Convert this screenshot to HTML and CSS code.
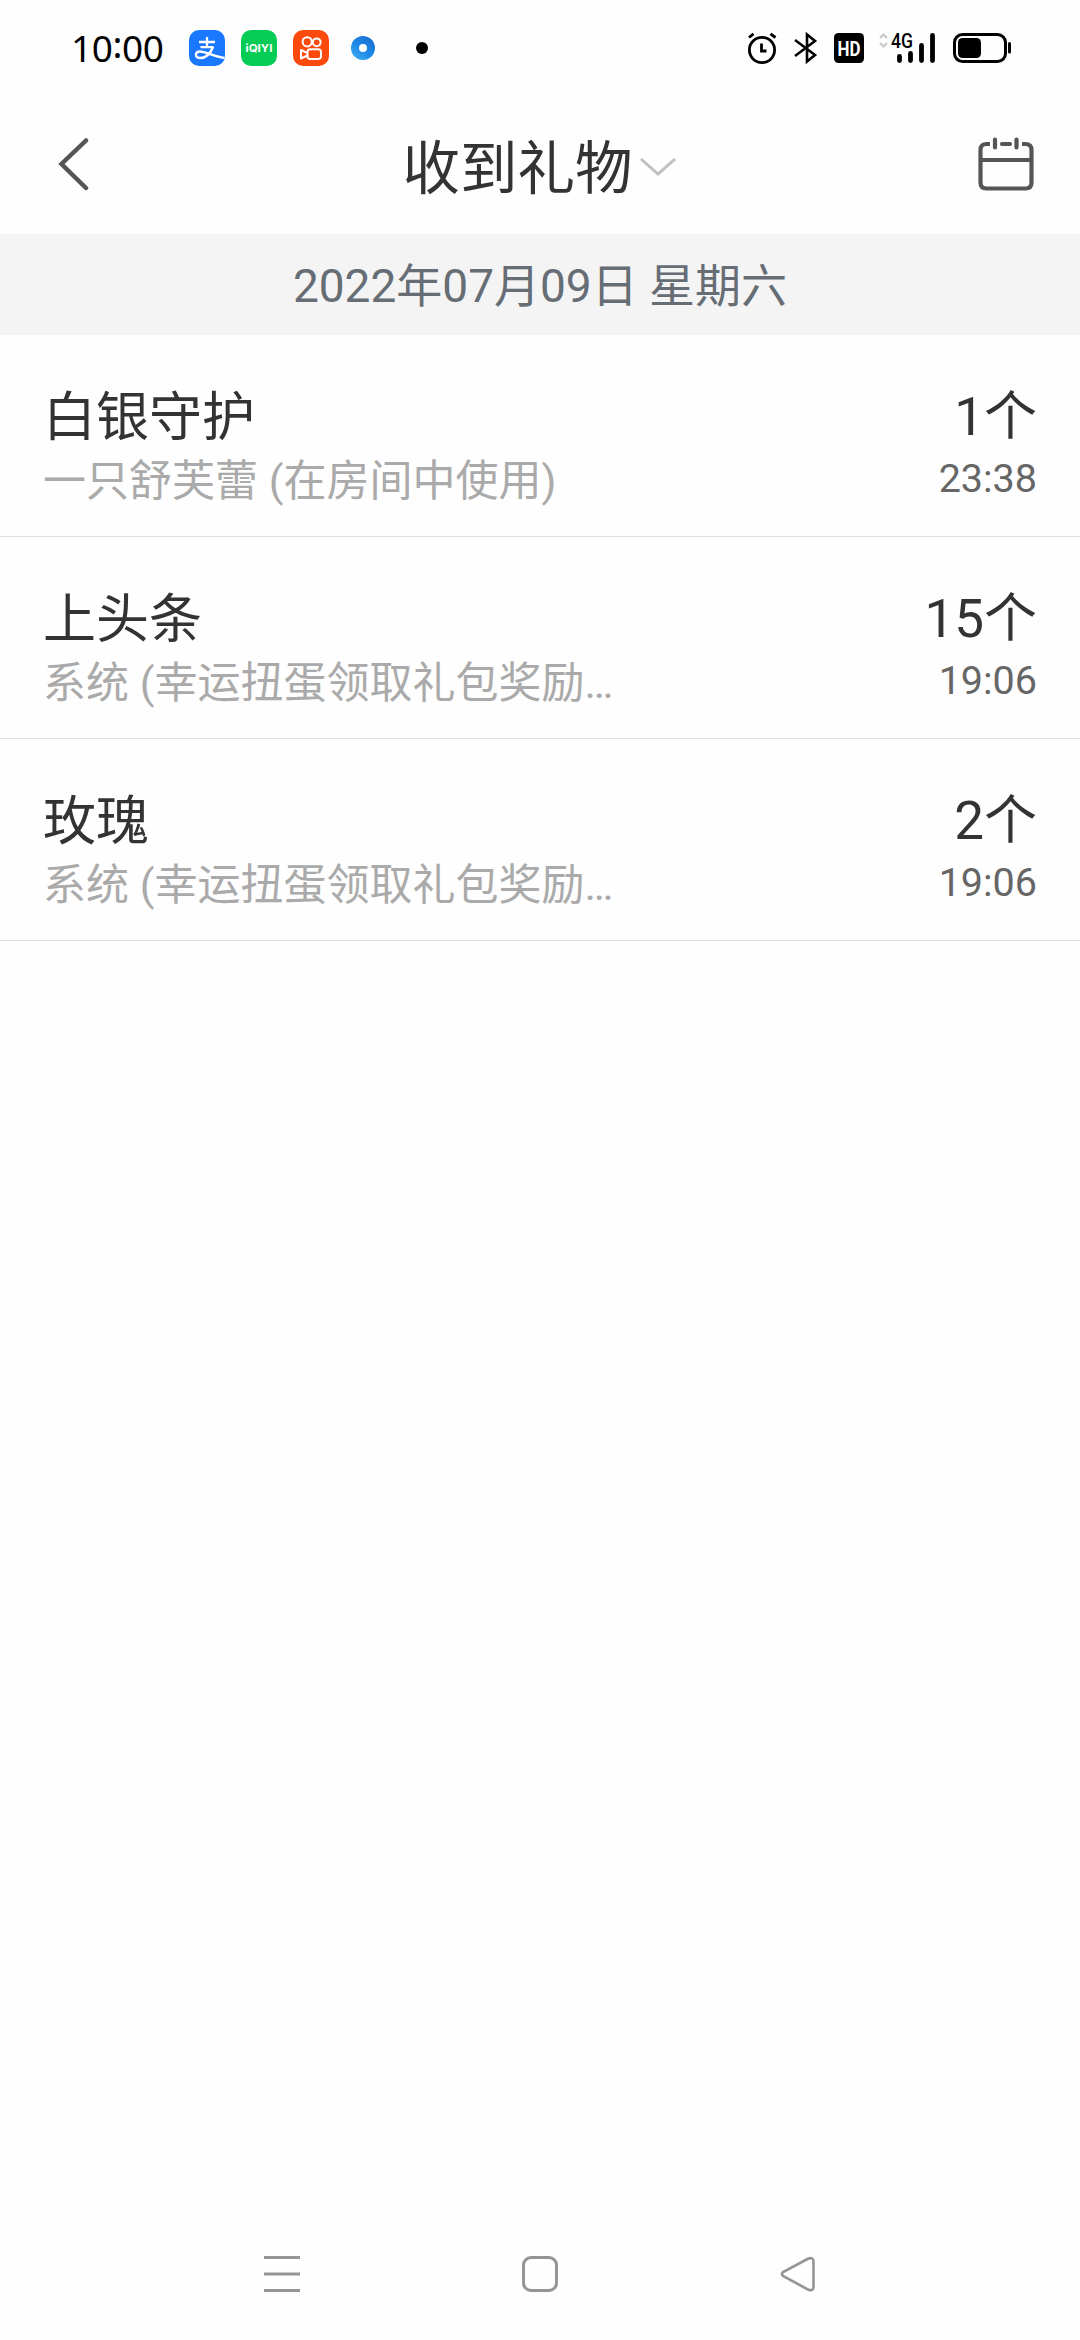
FILE: index.html
```html
<!DOCTYPE html>
<html lang="zh-CN">
<head>
<meta charset="utf-8">
<title>收到礼物</title>
<link rel="stylesheet" href="styles.css">
</head>
<body>
<div class="screen">
  <div class="status">
    <div class="status-left">
      <span class="clock">10<span class="colon">:</span>00</span>
      <svg class="app" viewBox="0 0 36 36"><rect width="36" height="36" rx="10" fill="#1a78ff"/><g fill="none" stroke="#fff"><path d="M10 12H26M18 7V16.5M11.500 17.200H24.500" stroke-width="2.300"/><path d="M24 17C22 22 18 28 11.500 28C5.500 28 5.500 21.500 11 21.500C17 21.500 24 26.500 35.500 28" stroke-width="2.400"/></g></svg>
      <svg class="app" viewBox="0 0 36 36"><rect width="36" height="36" rx="10" fill="#05cc54"/><text x="18" y="21.800" text-anchor="middle" textLength="27" lengthAdjust="spacingAndGlyphs" class="iqiyi">iQIYI</text></svg>
      <svg class="app" viewBox="0 0 36 36"><rect width="36" height="36" rx="10" fill="#fb4a0b"/><g fill="none" stroke="#fff" stroke-width="2"><circle cx="14.200" cy="11.800" r="4.600"/><circle cx="23.700" cy="12.300" r="3.900"/><rect x="14.500" y="19.300" width="13.500" height="9.700" rx="2.800"/><path d="M14.500 23L8 20V28.500L14.500 25.500" stroke-linejoin="round"/></g></svg>
      <svg class="browser" viewBox="0 0 24 24"><defs><linearGradient id="blue" x1="0" y1="1" x2="0.700" y2="0"><stop offset="0" stop-color="#45b4f5"/><stop offset="0.500" stop-color="#1f8ae8"/><stop offset="1" stop-color="#1a72d2"/></linearGradient></defs><circle cx="12" cy="12" r="12" fill="url(#blue)"/><circle cx="12" cy="12" r="4" fill="#fff"/></svg>
      <span class="more"></span>
    </div>
    <svg class="status-right" viewBox="0 0 266 32">
      <g fill="none" stroke="#000" stroke-width="2.800">
        <circle cx="14" cy="18" r="12.600"/><path d="M13.500 11.500V19H18.500M1 5.500L5.500 1.800M22.500 1.800L27.500 5.500"/>
        <path d="M47 8L67 23L59 29.500V2.500L67 9L47 24" stroke-width="2.600"/>
      </g>
      <rect x="86" y="1" width="30" height="30" rx="4.500"/>
      <text x="101" y="23.500" text-anchor="middle" textLength="23" lengthAdjust="spacingAndGlyphs" class="hd">HD</text>
      <path d="M132 6L135.500 2.500L139 6M132 11L135.500 14.500L139 11" fill="none" stroke="#c8c8c8" stroke-width="2.200"/>
      <text x="143" y="15.500" textLength="22" lengthAdjust="spacingAndGlyphs" class="net">4G</text>
      <path d="M151.500 24.500V28.500M162.500 21.500V28.500M173.500 13.500V28.500M184.500 3.500V28.500" stroke="#000" stroke-width="4.800" stroke-linecap="round"/>
      <rect x="206.500" y="2.500" width="51" height="27" rx="8" fill="none" stroke="#000" stroke-width="3"/>
      <rect x="210" y="6" width="23" height="20" rx="4.500"/>
      <path d="M261.500 11.500V20" stroke="#000" stroke-width="3" stroke-linecap="round"/>
    </svg>
  </div>
  <header class="header">
    <svg class="back" viewBox="0 0 32 56"><path d="M29 4.500L4.500 28L29 52" fill="none" stroke="#555" stroke-width="4.500" stroke-linecap="round"/></svg>
    <div class="heading"><h1 class="title">收到礼物</h1><svg class="chevron" viewBox="0 0 36 20"><path d="M1 2L18 17L35 2" fill="none" stroke="#c0c0c0" stroke-width="3"/></svg></div>
    <svg class="calendar" viewBox="0 0 56 54"><g fill="none" stroke="#555" stroke-width="4.200"><path d="M12 7H8.500Q2.500 7 2.500 13V45.500Q2.500 51.500 8.500 51.500H47.500Q53.500 51.500 53.500 45.500V13Q53.500 7 47.500 7H44M2.500 23H53.500"/><path d="M17 2.500V10.500M38.500 2.500V10.500M24 7H32" stroke-linecap="round"/></g></svg>
  </header>
  <div class="date">2022年07月09日 星期六</div>
  <main class="list">
    <div class="row">
      <div class="info"><div class="name">白银守护</div><div class="from">一只舒芙蕾 (在房间中使用)</div></div>
      <div class="meta"><div class="count">1个</div><div class="time">23:38</div></div>
    </div>
    <div class="row">
      <div class="info"><div class="name">上头条</div><div class="from">系统 (幸运扭蛋领取礼包奖励…</div></div>
      <div class="meta"><div class="count">15个</div><div class="time">19:06</div></div>
    </div>
    <div class="row">
      <div class="info"><div class="name">玫瑰</div><div class="from">系统 (幸运扭蛋领取礼包奖励…</div></div>
      <div class="meta"><div class="count">2个</div><div class="time">19:06</div></div>
    </div>
  </main>
  <nav class="nav">
    <svg class="nav-icon" viewBox="0 0 36 36"><path d="M0 1.500H36M0 18H36M0 34.500H36" stroke="#959595" stroke-width="3"/></svg>
    <svg class="nav-icon" viewBox="0 0 36 36"><rect x="1.500" y="1.500" width="33" height="33" rx="7.500" fill="none" stroke="#959595" stroke-width="3"/></svg>
    <svg class="nav-icon" viewBox="0 0 36 36"><path d="M28.500 2.500L3 16Q1 18 3 20L28.500 33.800Q33 35.500 33.500 31V5.200Q33 1 28.500 2.500Z" fill="none" stroke="#959595" stroke-width="2.600"/></svg>
  </nav>
</div>
</body>
</html>
```
FILE: styles.css
```css
* { box-sizing: border-box; }
body { margin: 0; background: #fff; font-family: Roboto, "Noto Sans CJK SC", sans-serif; }
svg { display: block; flex: none; }
.screen { width: 1080px; height: 2340px; display: flex; flex-direction: column; background: #fefefe; }
.status { height: 96px; padding: 0 66px 0 71px; display: flex; align-items: center; justify-content: space-between; color: #000; }
.status-left { display: flex; align-items: center; gap: 16px; }
.clock { width: 102px; font: 37px/94px "Noto Sans", sans-serif; letter-spacing: -0.4px; white-space: nowrap; }
.colon { display: inline-block; transform: translateY(-4px); }
.app { width: 36px; height: 36px; }
.iqiyi { font: 700 11px Inter, sans-serif; fill: #fff; }
.browser { width: 24px; height: 24px; margin-left: 6px; }
.more { width: 12px; height: 12px; margin-left: 25px; border-radius: 50%; background: #000; }
.status-right { width: 266px; height: 32px; overflow: visible; }
.hd { font: 700 21px Roboto, sans-serif; fill: #fff; }
.net { font: 500 19.5px Roboto, sans-serif; fill: #000; }
.header { height: 138px; padding: 0 46px 0 57px; display: grid; grid-template-columns: 56px 1fr 56px; align-items: center; }
.back { width: 32px; height: 56px; margin-bottom: 2px; }
.heading { display: flex; justify-content: center; align-items: center; gap: 7px; padding-right: 13px; }
.title { margin: 0; font-size: 57.5px; line-height: 84px; font-weight: 400; color: #333; padding-top: 10px; }
.chevron { width: 36px; height: 20px; margin-top: 4px; }
.calendar { width: 56px; height: 54px; margin-bottom: 2px; }
.date { height: 101px; background: #f4f4f4; color: #666d74; font-size: 46px; line-height: 104px; text-align: center; }
.row { height: 202px; padding: 47px 43px 0 43px; display: flex; justify-content: space-between; border-bottom: 1px solid #dedede; }
.name, .count { font-size: 53px; line-height: 70px; color: #333; }
.name { padding-top: 1px; margin-bottom: -1px; }
.from { font-size: 43px; line-height: 59px; color: #aaa; white-space: nowrap; }
.meta { text-align: right; }
.time { font-size: 39.5px; line-height: 54px; color: #666; }
.nav { height: 132px; margin-top: auto; padding: 0 264px; display: flex; align-items: center; justify-content: space-between; }
.nav-icon { width: 36px; height: 36px; }
```
